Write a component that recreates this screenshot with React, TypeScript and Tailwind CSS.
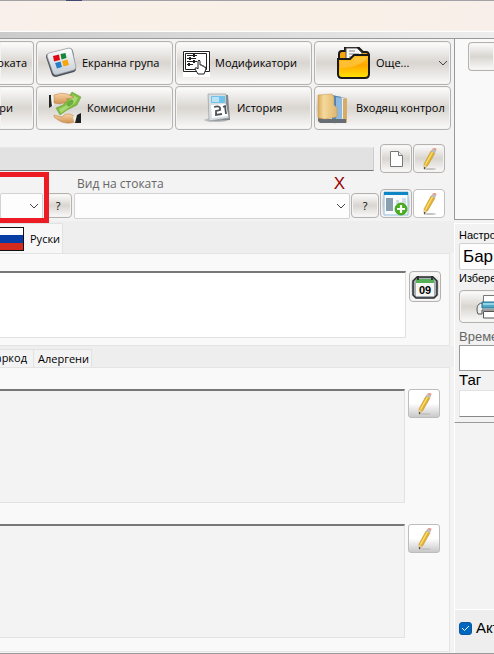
import type { ReactNode } from 'react';

const segoe = "font-['Open_Sans','Noto_Sans',sans-serif]";
const arial = "font-['Liberation_Sans',Arial,sans-serif]";
const metal =
  'border border-[#b4b2b0] rounded-[4px] bg-linear-to-b from-[#fdfdfd] via-[#d9d5d0] to-[#fafafa] shadow-[inset_0_0_0_1px_#f4f3f2]';

function ToolButton({ icon, label, className = '' }: { icon?: ReactNode; label: string; className?: string }) {
  return (
    <button
      type="button"
      className={`flex h-11 items-center overflow-hidden whitespace-nowrap text-[11px] leading-4 text-black ${metal} ${className}`}
    >
      {icon}
      <span>{label}</span>
    </button>
  );
}

function Tiles() {
  return (
    <svg width="32" height="32" viewBox="0 0 32 32" aria-hidden="true">
      <defs>
        <linearGradient id="tile" x1="0" y1="0" x2="0" y2="1">
          <stop offset="0" stopColor="#fff" />
          <stop offset="1" stopColor="#c3cbd3" />
        </linearGradient>
      </defs>
      <path d="M2 7 L24 1 Q27 1 28 4 L31 22 Q31 24 29 25 L11 30 Q8 30 7 28 L1 10 Q1 8 2 7Z" fill="#4c5258" />
      <path d="M4 6 L24 1 Q26 1 27 3 L31 20 Q31 22 29 23 L11 28 Q9 28 8 26 L2 9 Q2 7 4 6Z" fill="url(#tile)" stroke="#929aa2" strokeWidth=".7" />
      <path d="M8 9 L14 7.500 L15 13 L9 14.500Z" fill="#e00b12" />
      <path d="M15.500 7 L20.500 6 L21.500 11 L16.500 12.500Z" fill="#16853b" />
      <path d="M10 16 L15.500 14.500 L17 20 L12 21.500Z" fill="#267fc6" />
      <path d="M17 14 L22.500 12.500 L24 18 L18.500 19.500Z" fill="#f7a60b" />
    </svg>
  );
}

function Money() {
  return (
    <svg width="34" height="34" viewBox="0 0 34 34" aria-hidden="true">
      <defs>
        <linearGradient id="skin" x1="0" y1="0" x2="0" y2="1">
          <stop offset="0" stopColor="#f9d6a6" />
          <stop offset="1" stopColor="#cf9152" />
        </linearGradient>
      </defs>
      <path d="M1 4 L3 4 L4 15 L1 17Z" fill="#252525" />
      <path d="M3 5 L6 5 L6 14 L4 15Z" fill="#f3f3f3" />
      <path d="M8 17 L15 14 L24 1 L33 6 L29 14 L19 19 L12 24Z" fill="#80bd42" stroke="#609730" strokeWidth=".5" />
      <path d="M11 18 L17 15 L25 4 L30 7 L27 12 L13 22Z" fill="#a7d873" />
      <ellipse cx="22" cy="12" rx="4" ry="2.500" transform="rotate(-42 22 12)" fill="#6cae3c" />
      <path d="M6 4 Q13 1 19 3 L26 6 Q23 8 18 8 Q21 9 18 11 L12 13 L6 12Z" fill="url(#skin)" stroke="#b87a40" strokeWidth=".5" />
      <path d="M6 24 L14 26 Q17 22 22 23 L28 26 L27 31 Q17 34 10 29 L6 26Z" fill="url(#skin)" stroke="#b87a40" strokeWidth=".5" />
      <path d="M25 26 L28 23 L30 31 L26 31Z" fill="#eee" />
      <path d="M29 24 L33 22 L33 32 L27 32Z" fill="#202020" />
    </svg>
  );
}

function Modifiers() {
  return (
    <svg width="27" height="27" viewBox="0 0 27 27" aria-hidden="true">
      <path d="M0 0H27V27H0Z" fill="#fff" />
      <path d="M.5 1.500H26.500V21.500H.5Z M2.500 3.500H23.500V19.500H2.500Z" fill="none" stroke="#222" />
      <path d="M4 5.500H14 M4 8.500H13 M4 11.500H14 M4 14.500H10" stroke="#222" />
      <path d="M11 4V7 M7 7V10 M11 10V13 M6 13V16" stroke="#222" strokeWidth="2" />
      <path d="M15 24 L12 19 Q12 17 14 18 L15 19 V11 Q16 9 17 11 V15 Q19 14 19 16 Q21 15 21 17 Q23 16 23 19 L21 24Z" fill="#fff" stroke="#222" />
    </svg>
  );
}

function HistoryIcon() {
  return (
    <svg width="28" height="30" viewBox="0 0 28 30" aria-hidden="true">
      <ellipse cx="12" cy="27" rx="12" ry="2" fill="#bfc0c1" />
      <path d="M4 1 L24 2 L26 27 L6 28Z" fill="#7e8589" />
      <path d="M4 1 H22 V12 L25 25 L5 28Z" fill="#d8dde0" stroke="#9aa1a6" strokeWidth=".7" />
      <path d="M7 3 H21 V10 H7Z" fill="#6fc3eb" />
      <path d="M8 4H15V9H8Z" fill="#b9e2f4" />
      <path d="M7 12 L22 11 L24 23 L8 25Z" fill="#fff" />
      <path d="M10 14 Q17 12 16 17 L12 18 V22 L18 21 M19 14 L21 13 L22 21" fill="none" stroke="#4e5358" strokeWidth="1.800" />
    </svg>
  );
}

function FolderOpen() {
  return (
    <svg width="34" height="34" viewBox="0 0 34 34" aria-hidden="true">
      <defs>
        <linearGradient id="gold" x1="0" y1="0" x2="0" y2="1">
          <stop offset="0" stopColor="#ffbf18" />
          <stop offset=".45" stopColor="#ffa900" />
          <stop offset="1" stopColor="#ffe500" />
        </linearGradient>
      </defs>
      <path d="M2 13 V8 Q2 5 5 5 H8 V2 H22 L26 6 H29 Q32 6 32 10 V15Z" fill="#f8a50b" stroke="#191919" strokeWidth="2" />
      <path d="M9 2 H20 L25 7 V17 H9Z" fill="#f7f7f7" stroke="#555" />
      <path d="M12 5H18M12 8H22M12 11H22" stroke="#aaa" strokeWidth="1.500" />
      <path d="M1 13 H13 L17 9 H32 V28 Q32 32 28 32 H5 Q1 32 1 28Z" fill="url(#gold)" stroke="#191919" strokeWidth="2" />
      <path d="M3 22 Q20 22 30 13 V11 H18 L14 15 H3Z" fill="#ffd468" opacity=".45" />
    </svg>
  );
}

function Binder() {
  return (
    <svg width="31" height="31" viewBox="0 0 31 31" aria-hidden="true">
      <defs>
        <linearGradient id="sand">
          <stop offset="0" stopColor="#d9ab5e" />
          <stop offset=".3" stopColor="#f5d99a" />
          <stop offset="1" stopColor="#dfb66f" />
        </linearGradient>
      </defs>
      <path d="M17 3 L28 5 V28 L17 30Z" fill="#eee" stroke="#b7b7b7" />
      <path d="M15 2 L24 4 V28 L15 29Z" fill="#4c84b9" />
      <path d="M19 4 L25 5 V26 L19 28Z" fill="#8db9df" />
      <path d="M26 6 L30 5 V30 L26 28Z" fill="#d7ac68" />
      <path d="M1 24 L7 26 H29 V30 H3 L1 28Z" fill="#666d75" />
      <path d="M1 2 L15 1 L17 4 V12 L20 15 V24 L8 26 L1 25Z" fill="url(#sand)" stroke="#c2924a" strokeWidth=".5" />
    </svg>
  );
}

function Pencil() {
  return (
    <svg width="22" height="24" viewBox="0 0 22 24" aria-hidden="true">
      <ellipse cx="12" cy="22" rx="6" ry="1" fill="#c3c3c3" />
      <path d="M6 17 L13 4 L17 6 L9.500 19 L6 22Z" fill="#e3b22c" stroke="#b98f33" strokeWidth=".5" />
      <path d="M7.500 17.500 L14.500 5" stroke="#ffe07a" strokeWidth="1.300" />
      <path d="M6 17.500 L9 19 L6 22Z" fill="#e9cc9d" />
      <path d="M6 20 L7.500 20.800 L6 22.500Z" fill="#333" />
      <path d="M13 4 L14.200 2 L18 4 L17 6Z" fill="#b8bec2" />
      <path d="M14.200 2 Q16 0 18.500 1.800 L18 4Z" fill="#df9a8c" />
    </svg>
  );
}

function PageIcon() {
  return (
    <svg width="13" height="16" viewBox="0 0 13 16" aria-hidden="true">
      <path d="M.5 .5H8.500L12.500 4.500V15.500H.5Z" fill="#fff" stroke="#777" />
      <path d="M8.500 .5V4.500H12.500" fill="#eee" stroke="#777" />
    </svg>
  );
}

function AddWindow() {
  return (
    <svg width="26" height="26" viewBox="0 0 26 26" aria-hidden="true">
      <path d="M1 1H25V24H1Z" fill="#f7fbfd" stroke="#8fbfdb" />
      <path d="M1 1H25V4H1Z" fill="#0e86c5" />
      <path d="M3 7H10V20H3Z" fill="#8b9fae" />
      <path d="M13 9H16V13H13ZM19 7H23V14H19Z" fill="#d4dce3" />
      <circle cx="18" cy="18" r="6" fill="#49b01c" stroke="#348f12" strokeWidth=".7" />
      <path d="M18 14V22M14 18H22" stroke="#fff" strokeWidth="2.200" />
    </svg>
  );
}

function Calendar() {
  return (
    <svg width="26" height="24" viewBox="0 0 26 24" aria-hidden="true">
      <path d="M5 2H21L25 6V20L22 23H4L1 20V6Z" fill="#a9aeb3" stroke="#252a30" strokeWidth="1.500" />
      <path d="M4 4H22V21H4Z" fill="#f6f6f4" />
      <path d="M4 4H22V8H4Z" fill="#54af57" />
      <path d="M6 1V5M20 1V5" stroke="#333" strokeWidth="2" />
      <text x="13" y="19" textAnchor="middle" className="font-['Liberation_Sans',sans-serif] text-[11px] font-bold">09</text>
    </svg>
  );
}

function Printer() {
  return (
    <svg width="32" height="24" viewBox="0 0 32 24" className="shrink-0" aria-hidden="true">
      <path d="M7 8H25Q31 8 31 15V19H26V15H6V19H2Q1 17 1 14Q1 8 7 8Z" fill="#eceeef" stroke="#555" />
      <path d="M7.500 .5H24.500V8H7.500Z" fill="#fff" stroke="#777" />
      <path d="M6 7H26V13H6Z" fill="#50a8c6" stroke="#24708d" />
      <path d="M7 8H25V10H7Z" fill="#94d2e6" />
      <path d="M7.500 16.500H24.500V23H7.500Z" fill="#fff" stroke="#555" />
    </svg>
  );
}

function Chevron() {
  return (
    <svg width="10" height="6" viewBox="0 0 10 6" className="pointer-events-none" aria-hidden="true">
      <path d="M1 1L5 5L9 1" fill="none" stroke="#444" />
    </svg>
  );
}

function IconButton({ children, label, look = metal, size = 'h-[29px]' }: { children: ReactNode; label: string; look?: string; size?: string }) {
  return (
    <button type="button" aria-label={label} className={`flex w-8 shrink-0 items-center justify-center ${size} ${look}`}>
      {children}
    </button>
  );
}

const white = 'border border-[#c2c0be] rounded-[4px] bg-white';
const fade = 'border border-[#bdbdbd] rounded-[3px] bg-linear-to-b from-white from-50% to-[#c9c9c9]';

function Combo({ id, label, className }: { id: string; label: string; className: string }) {
  return (
    <div className={`grid h-[25px] items-center ${className}`}>
      <select
        id={id}
        aria-label={label}
        className="col-start-1 row-start-1 h-full w-full appearance-none rounded-[2px] border border-[#d2d2d2] bg-[#fdfdfd]"
      />
      <span className="pointer-events-none col-start-1 row-start-1 mr-1 justify-self-end">
        <Chevron />
      </span>
    </div>
  );
}

function HelpButton() {
  return (
    <button type="button" className={`h-[25px] w-7 shrink-0 text-[11px] leading-4 font-medium ${metal}`}>
      ?
    </button>
  );
}

const area =
  'block min-w-0 flex-1 resize-none border-t-2 border-r border-b border-t-[#777] border-r-[#e2e2e2] border-b-[#e2e2e2]';

function Main() {
  return (
    <main className={`flex min-w-0 flex-1 flex-col bg-[#f3f3f3] ${segoe}`}>
      <div className="grid grid-cols-[34px_1fr_1fr_1fr] gap-x-[2px] gap-y-px pt-[2px] pr-[3px]">
        <ToolButton label="оката" className="justify-end rounded-l-none border-l-0 pr-[6px]" />
        <ToolButton icon={<Tiles />} label="Екранна група" className="gap-[5px] pl-2" />
        <ToolButton icon={<Modifiers />} label="Модификатори" className="gap-[5px] pl-[7px]" />
        <button type="button" className={`flex h-11 items-center gap-[5px] pr-[2px] pl-[22px] text-[11px] leading-4 ${metal}`}>
          <FolderOpen />
          <span>Още...</span>
          <span className="ml-auto">
            <Chevron />
          </span>
        </button>
        <ToolButton label="ри" className="justify-end rounded-l-none border-l-0 pr-5" />
        <ToolButton icon={<Money />} label="Комисионни" className="gap-[5px] pl-[11px]" />
        <ToolButton icon={<HistoryIcon />} label="История" className="gap-[5px] pl-7" />
        <ToolButton icon={<Binder />} label="Входящ контрол" className="gap-2 pl-[2px]" />
      </div>

      <div className="mt-[14px] flex items-center pr-[9px]">
        <input aria-label="Стока" readOnly className="mr-[6px] h-6 min-w-0 flex-1 border-t border-r border-b border-t-[#e8e8e8] border-r-[#ccc] border-b-[#777] bg-[#e2e2e2]" />
        <div className="flex gap-px">
          <IconButton label="Нов"><PageIcon /></IconButton>
          <IconButton label="Редакция"><Pencil /></IconButton>
        </div>
      </div>

      <div className="relative flex items-end gap-px pt-[3px] pr-[9px] pb-[3px]">
        <div className="flex min-w-0 flex-1 flex-col gap-px">
          <div className="flex items-center pr-[34px] pl-[77px]">
            <label htmlFor="kind" className="text-[12px] leading-4 text-[#666]">Вид на стоката</label>
            <span className={`ml-auto text-[17px] leading-4 text-[#900] ${arial}`}>X</span>
          </div>
          <div className="flex gap-px">
            <Combo id="group" label="Група" className="w-[43px] shrink-0" />
            <HelpButton />
            <Combo id="kind" label="Вид на стоката" className="ml-px min-w-0 flex-1" />
            <HelpButton />
          </div>
        </div>
        <IconButton label="Добави"><AddWindow /></IconButton>
        <IconButton label="Редакция на вида" look={white}><Pencil /></IconButton>
        <div className="pointer-events-none absolute -top-px left-0 h-[51px] w-[49px] border-[5px] border-l-0 border-[#ed1c24]" />
      </div>

      <div role="tablist" className="flex h-8 items-end bg-[#eee]">
        <button type="button" role="tab" aria-selected="true" className="flex h-[30px] w-[63px] items-center gap-[6px] border-t border-r border-[#e2e2e2] bg-[#f7f7f7] text-[11px] leading-4">
          <svg width="24" height="24" viewBox="0 0 24 24" aria-hidden="true">
            <path d="M0 0H24V24H0Z" fill="#111" />
            <path d="M0 1H23V8H0Z" fill="#fff" />
            <path d="M0 8H23V16H0Z" fill="#083da5" />
            <path d="M0 16H23V23H0Z" fill="#d52b1e" />
          </svg>
          Руски
        </button>
      </div>
      <section className="mr-1 flex h-[93px] items-start gap-[3px] border-t border-r border-b border-[#e4e4e4] bg-[#f9f9f9] pt-[17px] pr-[8px]">
        <textarea aria-label="Руски" className={`h-[67px] bg-white ${area}`} />
        <IconButton label="Календар" size="h-[31px]"><Calendar /></IconButton>
      </section>

      <div role="tablist" className="flex h-[21px] items-end bg-[#eee] text-[11px] leading-4">
        <button type="button" role="tab" className="flex h-[18px] w-[34px] justify-end overflow-hidden border-t border-r border-[#e2e2e2] bg-[#f3f3f3] pr-[6px]">аркод</button>
        <button type="button" role="tab" className="h-[18px] w-[58px] border-t border-r border-[#e2e2e2] bg-[#f3f3f3] pl-[2px]">Алергени</button>
      </div>
      <section className="mr-1 flex h-[285px] flex-col gap-[21px] border-t border-r border-b border-[#e4e4e4] bg-[#f9f9f9] pt-[21px] pr-[9px]">
        {['Описание', 'Бележка'].map((name) => (
          <div key={name} className="flex items-start gap-[3px]">
            <textarea aria-label={name} className={`h-[114px] bg-[#f3f3f3] ${area}`} />
            <IconButton label={`Редакция: ${name}`} look={fade}><Pencil /></IconButton>
          </div>
        ))}
      </section>
    </main>
  );
}

function Sidebar() {
  return (
    <aside className={`flex w-10 shrink-0 flex-col overflow-hidden whitespace-nowrap ${arial}`}>
      <div className="h-[181px] border-b border-l border-[#999] bg-[#f9f9f9] pt-[3px] pl-[13px]">
        <button type="button" aria-label="Действие" className={`h-[29px] w-full rounded-r-none border-r-0 ${metal}`} />
      </div>
      <div className="mt-[3px] flex h-[200px] flex-col border-t border-l border-white border-b border-b-[#999] bg-[#f2f2f2] pl-1">
        <label htmlFor="object" className="mt-[3px] text-[11px] leading-4">Настро</label>
        <input id="object" defaultValue="Бар" className="h-[27px] w-20 rounded-[2px] border border-[#d0d0d0] bg-[#fdfdfd] px-[3px] text-[17px] leading-6" />
        <span className="text-[11px] leading-4">Избере</span>
        <button type="button" aria-label="Принтер" className={`mt-1 flex h-[33px] w-20 shrink-0 items-center pl-4 ${metal}`}>
          <Printer />
        </button>
        <label htmlFor="time" className="mt-[6px] text-[13px] leading-4 text-[#666]">Време</label>
        <input id="time" className="h-[26px] w-20 shrink-0 border border-[#999] bg-white" />
        <label htmlFor="tag" className="mt-px text-[15px] leading-4">Таг</label>
        <input id="tag" className="mt-[2px] h-[27px] w-20 shrink-0 border border-[#e2e2e2] border-b-[#888] bg-white" />
      </div>
      <div className="flex-1 border-l border-white bg-[#f3f3f3]" />
      <label className="flex h-11 items-center gap-1 border-t border-l border-white bg-[#eee] pb-[7px] pl-1 text-[15px] leading-5">
        <span className="grid shrink-0 items-center justify-items-center">
          <input type="checkbox" defaultChecked className="col-start-1 row-start-1 size-[13px] appearance-none rounded-[3px] border border-[#1055a0] bg-[#0067c0]" />
          <svg width="9" height="7" viewBox="0 0 9 7" className="pointer-events-none col-start-1 row-start-1" aria-hidden="true">
            <path d="M1 3L3.500 5.500L8 1" fill="none" stroke="#fff" />
          </svg>
        </span>
        Акт
      </label>
    </aside>
  );
}

export default function App() {
  return (
    <div className="flex min-h-screen flex-col overflow-hidden bg-[#f3f3f3] text-black">
      <header>
        <div className="flex h-px bg-[#a2a1a6] pl-[66px]">
          <span className="w-4 bg-[#404a70]" />
        </div>
        <div className="h-[30px] bg-linear-to-r from-[#faf0eb] via-[#f9f1e7] to-[#f9efea]" />
        <div className="h-[8px] border-t border-b border-t-white border-b-[#999] bg-linear-to-r from-[#cbcbcb] to-[#ededed]" />
      </header>
      <div className="flex flex-1 border-b border-[#999]">
        <Main />
        <Sidebar />
      </div>
    </div>
  );
}
